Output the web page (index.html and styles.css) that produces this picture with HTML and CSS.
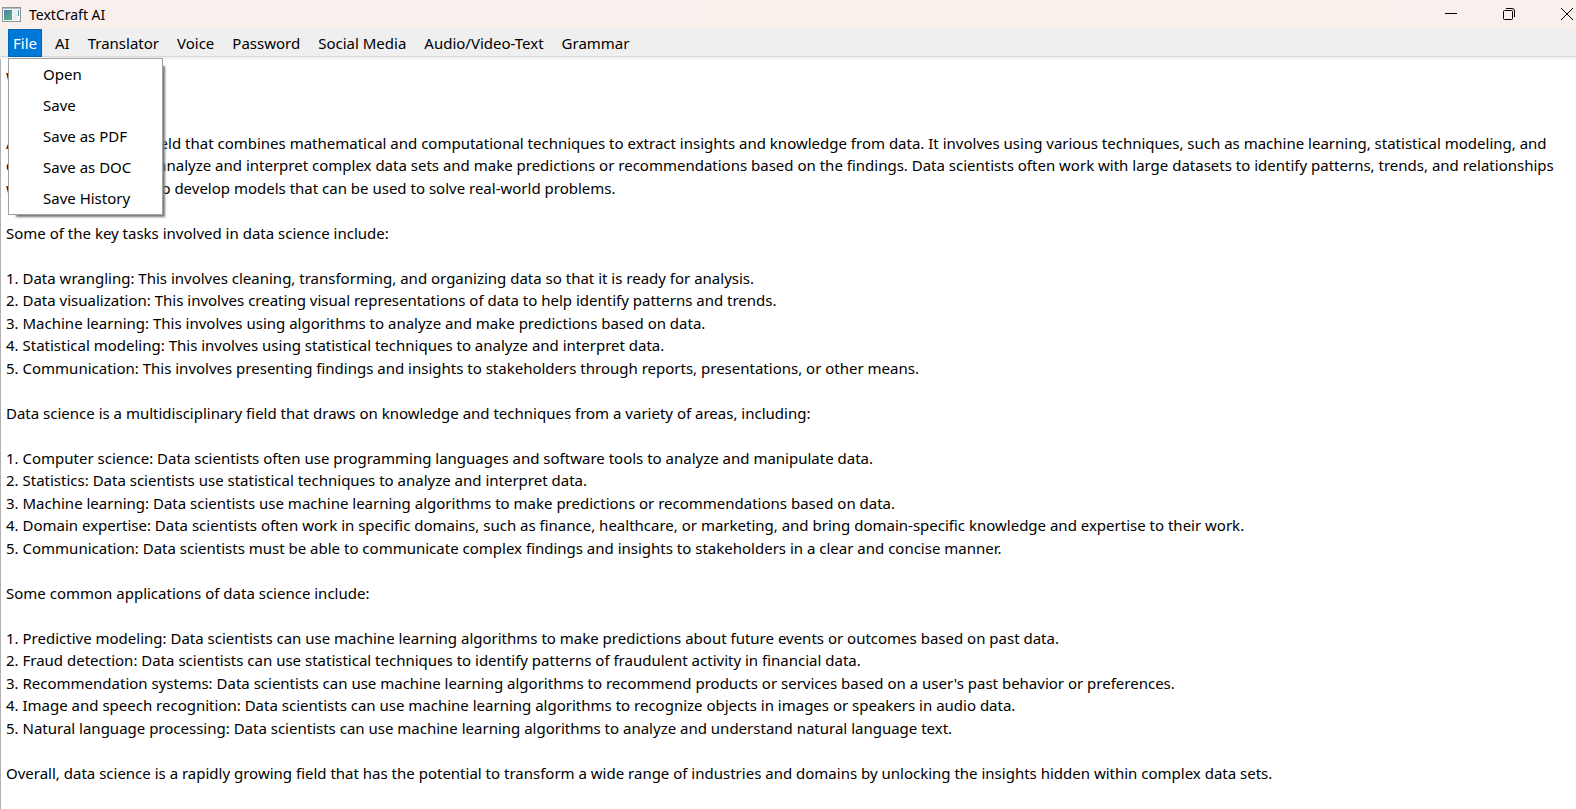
FILE: index.html
```html
<!DOCTYPE html>
<html lang="en">
<head>
<meta charset="utf-8">
<title>TextCraft AI</title>
<link rel="stylesheet" href="styles.css">
</head>
<body>
<div class="window">
  <header class="titlebar">
    <svg class="app-icon" width="19" height="15" viewBox="0 0 19 15" aria-hidden="true">
      <defs>
        <linearGradient id="pane" x1="0" y1="0" x2="1" y2="1">
          <stop offset="0" stop-color="#4a7fb0"/>
          <stop offset="1" stop-color="#5cb578"/>
        </linearGradient>
      </defs>
      <rect x="0.5" y="0.5" width="18" height="14" fill="#f4f8f8" stroke="#8f9698"/>
      <rect x="1" y="1" width="17" height="1" fill="#b4bcbe"/>
      <rect x="2" y="3" width="8" height="10" fill="url(#pane)"/>
      <rect x="11" y="3" width="4" height="10" fill="#e6eeee"/>
      <rect x="16" y="3" width="1" height="6" fill="#4e9fae"/>
    </svg>
    <h1 class="title">TextCraft AI</h1>
    <div class="controls">
      <button class="control" type="button" aria-label="Minimize">
        <svg width="12" height="12" viewBox="0 0 12 12"><path d="M0 5.5h12" stroke="#000" fill="none"/></svg>
      </button>
      <button class="control" type="button" aria-label="Restore">
        <svg width="12" height="12" viewBox="0 0 12 12" fill="none" stroke="#000"><rect x="0.5" y="2.5" width="9" height="9" rx="1"/><path d="M3 .5h6a2.500 2.500 0 0 1 2.500 2.500v6"/></svg>
      </button>
      <button class="control" type="button" aria-label="Close">
        <svg width="12" height="12" viewBox="0 0 12 12"><path d="M0 0l12 12M12 0L0 12" stroke="#000" fill="none"/></svg>
      </button>
    </div>
  </header>
  <nav class="menubar">
    <div class="menu">
      <button class="menu-button active" type="button" aria-expanded="true">File</button>
      <div class="dropdown">
        <button class="entry" type="button">Open</button>
        <button class="entry" type="button">Save</button>
        <button class="entry" type="button">Save as PDF</button>
        <button class="entry" type="button">Save as DOC</button>
        <button class="entry" type="button">Save History</button>
      </div>
    </div>
    <button class="menu-button" type="button">AI</button>
    <button class="menu-button" type="button">Translator</button>
    <button class="menu-button" type="button">Voice</button>
    <button class="menu-button" type="button">Password</button>
    <button class="menu-button" type="button">Social Media</button>
    <button class="menu-button" type="button">Audio/Video-Text</button>
    <button class="menu-button" type="button">Grammar</button>
  </nav>
  <textarea class="editor" aria-label="Document" spellcheck="false">what is data science


An inter-disciplinary field that combines mathematical and computational techniques to extract insights and knowledge from data. It involves using various techniques, such as machine learning, statistical modeling, and
data visualizations to analyze and interpret complex data sets and make predictions or recommendations based on the findings. Data scientists often work with large datasets to identify patterns, trends, and relationships
within that data, and to develop models that can be used to solve real-world problems.

Some of the key tasks involved in data science include:

1. Data wrangling: This involves cleaning, transforming, and organizing data so that it is ready for analysis.
2. Data visualization: This involves creating visual representations of data to help identify patterns and trends.
3. Machine learning: This involves using algorithms to analyze and make predictions based on data.
4. Statistical modeling: This involves using statistical techniques to analyze and interpret data.
5. Communication: This involves presenting findings and insights to stakeholders through reports, presentations, or other means.

Data science is a multidisciplinary field that draws on knowledge and techniques from a variety of areas, including:

1. Computer science: Data scientists often use programming languages and software tools to analyze and manipulate data.
2. Statistics: Data scientists use statistical techniques to analyze and interpret data.
3. Machine learning: Data scientists use machine learning algorithms to make predictions or recommendations based on data.
4. Domain expertise: Data scientists often work in specific domains, such as finance, healthcare, or marketing, and bring domain-specific knowledge and expertise to their work.
5. Communication: Data scientists must be able to communicate complex findings and insights to stakeholders in a clear and concise manner.

Some common applications of data science include:

1. Predictive modeling: Data scientists can use machine learning algorithms to make predictions about future events or outcomes based on past data.
2. Fraud detection: Data scientists can use statistical techniques to identify patterns of fraudulent activity in financial data.
3. Recommendation systems: Data scientists can use machine learning algorithms to recommend products or services based on a user's past behavior or preferences.
4. Image and speech recognition: Data scientists can use machine learning algorithms to recognize objects in images or speakers in audio data.
5. Natural language processing: Data scientists can use machine learning algorithms to analyze and understand natural language text.

Overall, data science is a rapidly growing field that has the potential to transform a wide range of industries and domains by unlocking the insights hidden within complex data sets.</textarea>
</div>
</body>
</html>
```
FILE: styles.css
```css
* {
  box-sizing: border-box;
}

body {
  margin: 0;
  font-family: "Segoe UI", "Noto Sans", sans-serif;
  font-size: 15px;
  color: #000;
  background: #fff;
}

button {
  border: 0;
  background: none;
  font: inherit;
  color: inherit;
}

.window {
  display: flex;
  flex-direction: column;
  height: 100vh;
}

.titlebar {
  display: flex;
  align-items: center;
  height: 29px;
  padding: 0 3px 1px 2px;
  background: linear-gradient(90deg, #f9efed 40%, #faf1eb 55%, #f9f0ec 80%, #f9f0ee);
}

.title {
  margin: 0 auto 0 8px;
  font-size: 14px;
  font-weight: 400;
}

.controls {
  display: flex;
  gap: 46px;
}

.control {
  display: flex;
  padding: 0;
}

.menubar {
  display: flex;
  gap: 8px;
  height: 30px;
  padding: 0 8px 2px;
  background: linear-gradient(#efefef 27px, #d7d7d7 27px, #d7d7d7 28px, #f0f0f0 28px);
}

.menu {
  position: relative;
  display: flex;
}

.menu-button {
  padding: 0 5px;
}

.active {
  background: #0078d7;
  box-shadow: inset 0 0 0 1px #0067b8;
  color: #fff;
}

.dropdown {
  position: absolute;
  z-index: 1;
  top: 100%;
  left: 0;
  display: flex;
  flex-direction: column;
  width: 155px;
  margin-top: 1px;
  border: 1px solid #a0a0a0;
  background: #fff;
  box-shadow: 5px 5px 2px -3px #777;
}

.entry {
  height: 31px;
  padding: 0 0 1px 34px;
  text-align: left;
}

.editor {
  flex: 1;
  width: 100%;
  padding: 5px 0 0 5px;
  border: 0;
  border-left: 1px solid #b0b0b0;
  outline: 0;
  resize: none;
  overflow: hidden;
  white-space: pre;
  font: inherit;
  line-height: 1.5;
  color: inherit;
  background: #fff;
}
```
